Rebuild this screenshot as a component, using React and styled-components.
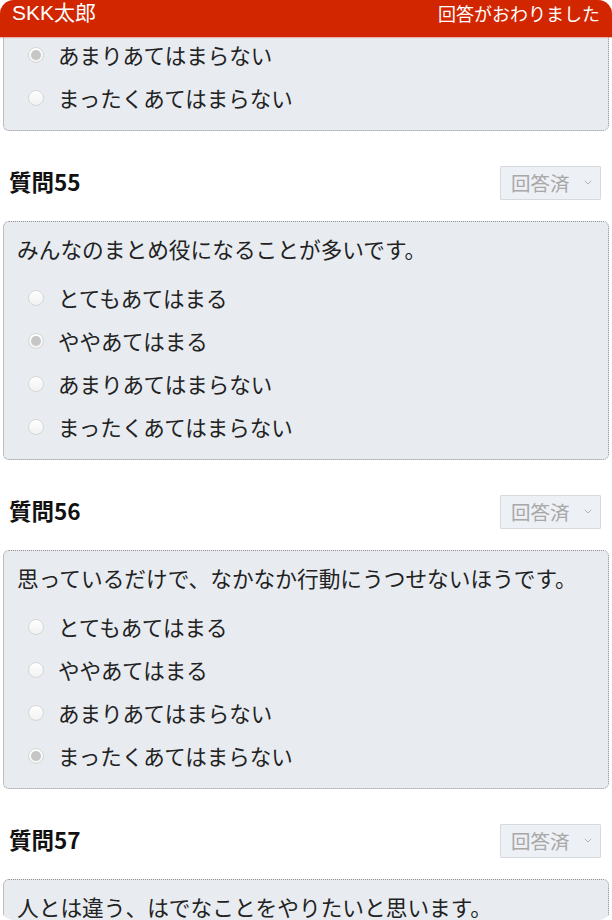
import React from "react";
import styled, { createGlobalStyle } from "styled-components";

const GlobalStyle = createGlobalStyle`
  html, body { margin: 0; padding: 0; background: #ffffff; }
  body { font-family: "Noto Sans CJK JP", "Noto Sans", sans-serif; color: #222; }
  * { box-sizing: border-box; }
`;

const Frame = styled.div`
  position: relative;
  width: 612px;
  height: 920px;
  overflow: hidden;
  border-radius: 14px;
  background: #ffffff;
`;

const Header = styled.header`
  position: absolute;
  top: 0;
  left: 0;
  right: 0;
  z-index: 2;
  height: 37px;
  padding: 0 12px;
  display: flex;
  justify-content: space-between;
  align-items: flex-start;
  background: #d22600;
  color: #ffffff;
  line-height: 26px;
  box-shadow: 0 1px 1px rgba(230, 120, 100, 0.5);
`;

const Brand = styled.div`
  font-family: "Liberation Sans", "Noto Sans CJK JP", sans-serif;
  font-size: 21px;
`;

const Status = styled.div`
  font-size: 18px;
  line-height: 26px;
`;

const List = styled.main`
  margin-top: ${(p) => p.$offset}px;
  padding: 0 3px;
`;

const QuestionHead = styled.div`
  display: flex;
  justify-content: space-between;
  align-items: center;
  margin: 35px 8px 21px 6px;
  height: 34px;
`;

const Title = styled.h2`
  margin: 0;
  padding-bottom: 4px;
  font-size: 22.5px;
  font-weight: 700;
  color: #111;
  line-height: 30px;
`;

const StateSelect = styled.div`
  width: 101px;
  height: 34px;
  display: flex;
  align-items: center;
  justify-content: space-between;
  padding: 0 8px 2px 10px;
  background: #edf0f4;
  border: 1px solid #d6dade;
  color: #a8a8a8;
  font-size: 19.5px;
  border-radius: 1px;
`;

const Card = styled.section`
  background: #e8ecf1;
  border: 1px dotted #8e8e8e;
  border-radius: 6px;
  padding: 13px 13px 11px 13px;
`;

const QText = styled.p`
  margin: 0;
  font-size: 21.7px;
  line-height: 28px;
  color: #222;
  white-space: nowrap;
`;

const Options = styled.ul`
  list-style: none;
  margin: 13px 0 0 0;
  padding: 0;
`;

const Option = styled.li`
  height: 43px;
  display: flex;
  align-items: center;
  gap: 14px;
  padding-left: 11px;
  font-size: 21.5px;
  color: #222;
`;

const Radio = styled.span`
  position: relative;
  width: 16px;
  height: 16px;
  border-radius: 50%;
  border: 1px solid #d6d6d6;
  background: linear-gradient(#fefefe, #f2f2f2);
  flex: none;
  &::after {
    content: "";
    display: ${(p) => (p.$checked ? "block" : "none")};
    position: absolute;
    top: 2px;
    left: 2px;
    width: 10px;
    height: 10px;
    border-radius: 50%;
    background: #c6c6c6;
  }
`;

const Chevron = () => (
  <svg width="8" height="5" viewBox="0 0 8 5" fill="none">
    <path d="M0.8 0.8l3.2 3.2 3.2-3.2" stroke="#b4b4b4" strokeWidth="1" />
  </svg>
);

const CHOICES = [
  "とてもあてはまる",
  "ややあてはまる",
  "あまりあてはまらない",
  "まったくあてはまらない",
];

const QUESTIONS = [
  { no: 54, text: "人前で話すことは苦になりません。", answer: 2 },
  { no: 55, text: "みんなのまとめ役になることが多いです。", answer: 1 },
  { no: 56, text: "思っているだけで、なかなか行動にうつせないほうです。", answer: 3 },
  { no: 57, text: "人とは違う、はでなことをやりたいと思います。", answer: -1 },
];

function QuestionCard({ q }) {
  return (
    <Card>
      <QText>{q.text}</QText>
      <Options>
        {CHOICES.map((c, i) => (
          <Option key={c}>
            <Radio $checked={q.answer === i} />
            {c}
          </Option>
        ))}
      </Options>
    </Card>
  );
}

export default function App() {
  return (
    <>
      <GlobalStyle />
      <Frame>
        <Header>
          <Brand>SKK太郎</Brand>
          <Status>回答がおわりました</Status>
        </Header>
        <List $offset={-108}>
          {QUESTIONS.map((q, idx) => (
            <React.Fragment key={q.no}>
              {idx > 0 && (
                <QuestionHead>
                  <Title>質問{q.no}</Title>
                  <StateSelect>
                    回答済
                    <Chevron />
                  </StateSelect>
                </QuestionHead>
              )}
              <QuestionCard q={q} />
            </React.Fragment>
          ))}
        </List>
      </Frame>
    </>
  );
}
